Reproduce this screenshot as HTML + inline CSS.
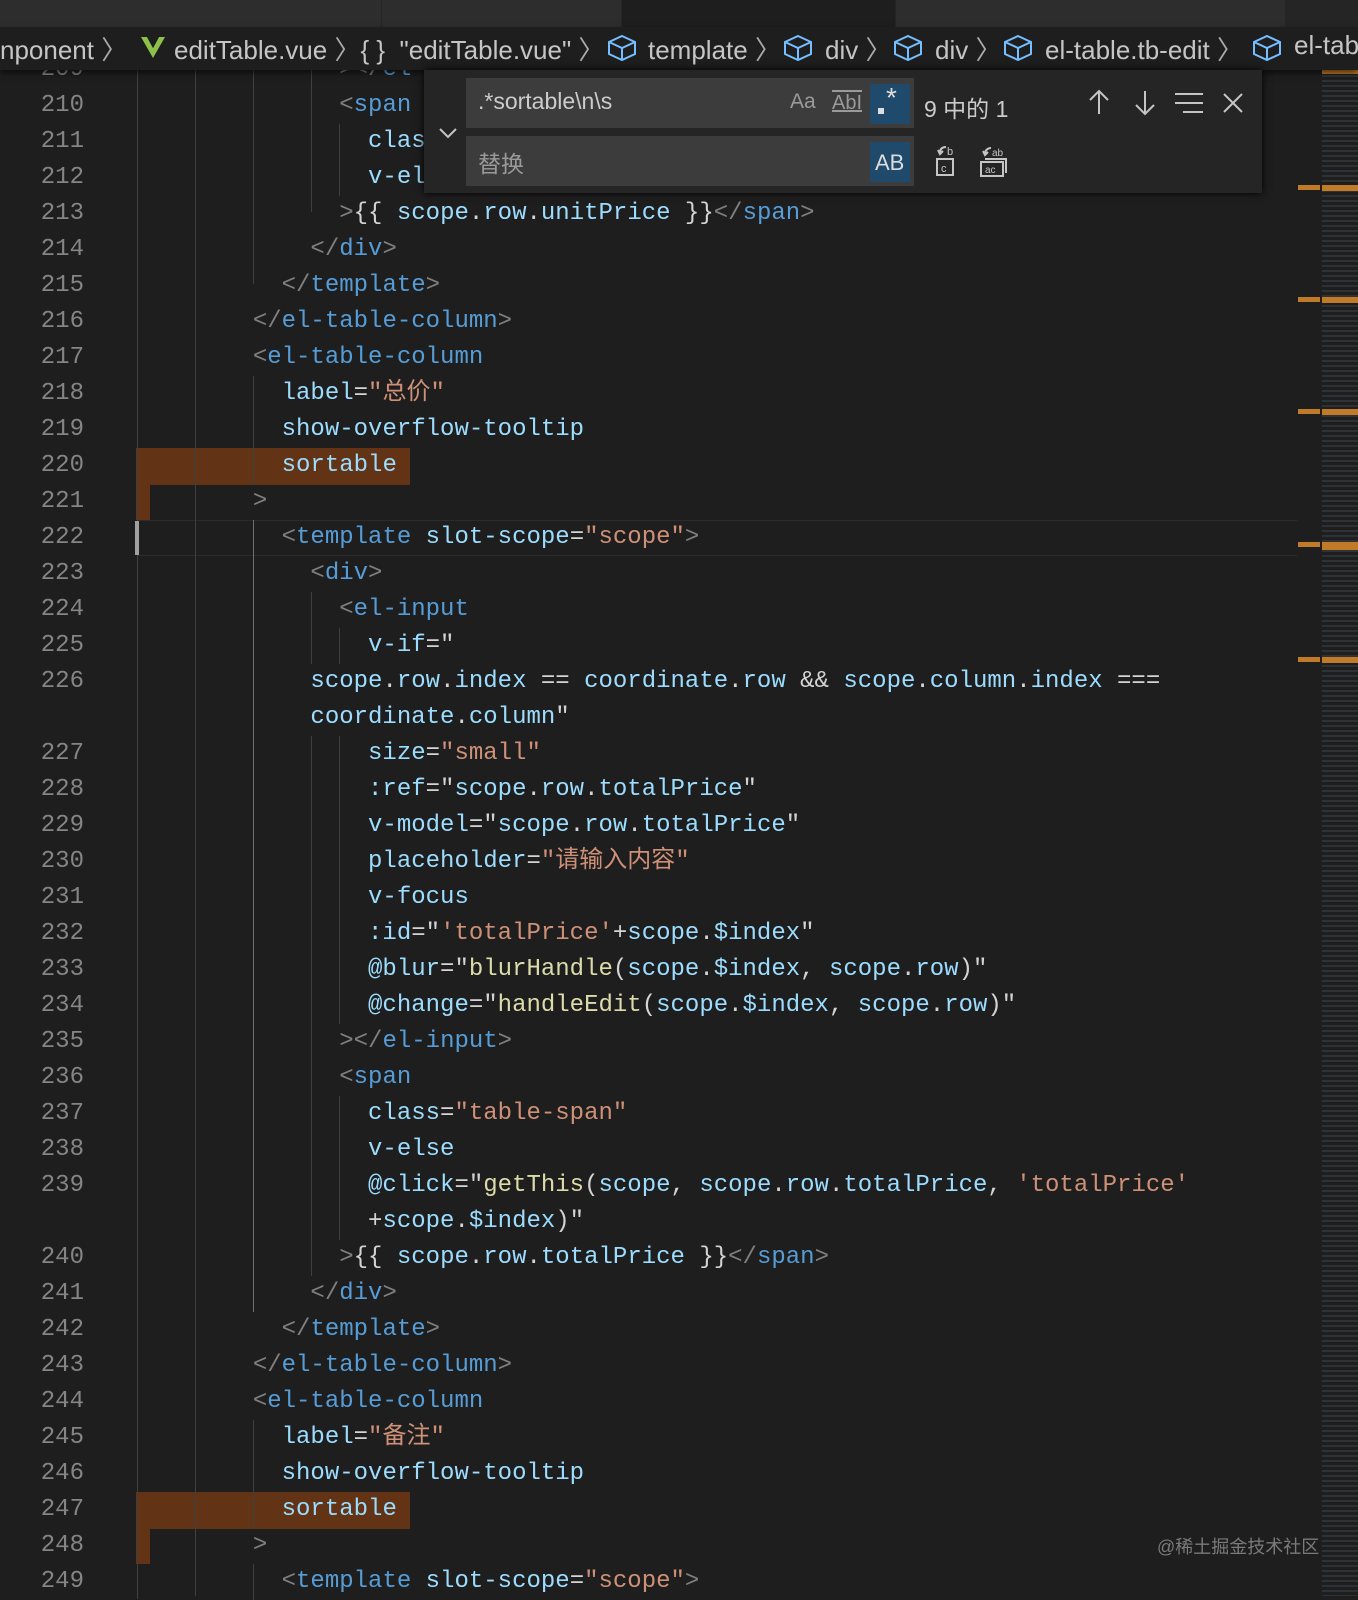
<!DOCTYPE html>
<html><head><meta charset="utf-8"><style>
body{margin:0;width:1358px;height:1596px;background:#1e1e1e;overflow:hidden;position:relative;font-family:"Liberation Mono","Noto Sans CJK SC",monospace}
.tabs{position:absolute;left:0;top:0;width:1358px;height:27px;background:#252526;z-index:5}
.tab{position:absolute;top:0;height:27px;background:#2d2d2d;border-right:1px solid #252526}
.bc{position:absolute;left:0;top:27px;width:1358px;height:43px;background:#1e1e1e;z-index:5;box-shadow:0 3px 6px rgba(0,0,0,.6);font-family:"Liberation Sans",sans-serif;font-size:26px;color:#c5c5c5;white-space:nowrap}
.bc span{position:absolute;top:3px}
.bc i{font-style:normal;color:#aaa}
.code{position:absolute;left:0;top:3px;width:1300px;height:1596px}
.l{position:absolute;left:0;height:36px;line-height:36px;font-size:24px;white-space:pre;width:1270px}
.n{position:absolute;left:0;width:84px;text-align:right;color:#858585}
.c{position:absolute;left:137.6px;color:#d4d4d4}
.p{color:#808080}.t{color:#569cd6}.a{color:#9cdcfe}.s{color:#ce9178}.f{color:#dcdcaa}.w{color:#d4d4d4}
.g{position:absolute;width:1px;background:#404040}
.hl{position:absolute;background:#623315}
.fw{position:absolute;left:424px;top:70px;width:838px;height:123px;background:#252526;box-shadow:0 0 8px #000;z-index:6;font-family:"Liberation Sans","Noto Sans CJK SC",sans-serif;color:#cccccc}
.in{position:absolute;background:#3c3c3c}
.mm{position:absolute;left:1322px;top:70px;width:36px;height:1526px;background:repeating-linear-gradient(180deg,rgba(110,140,160,.18) 0 2px,transparent 2px 5px);z-index:1}
.or{position:absolute;background:#c07a28;z-index:2}
</style></head><body>
<div class="tabs">
<div class="tab" style="left:0;width:381px"></div>
<div class="tab" style="left:382px;width:239px"></div>
<div class="tab" style="left:622px;width:273px;background:#1e1e1e"></div>
<div class="tab" style="left:896px;width:389px"></div>
</div>
<div class="bc">
<span style="left:0">nponent <i>〉</i></span>
<svg style="position:absolute;left:140px;top:9px" width="26" height="22" viewBox="0 0 26 22"><path d="M1 1h6l6 11 6-11h6L13 22z" fill="#8dc149"/><path d="M7 1h4l2 4 2-4h4l-6 11z" fill="#1e1e1e"/></svg>
<span style="left:174px">editTable.vue <i>〉</i>{ }&nbsp; &quot;editTable.vue&quot; <i>〉</i></span>
<span style="left:648px">template <i>〉</i></span>
<span style="left:825px">div <i>〉</i></span>
<span style="left:935px">div <i>〉</i></span>
<span style="left:1045px">el-table.tb-edit <i>〉</i></span>
<span style="left:1294px">el-tab</span>
<svg style="position:absolute;left:607px;top:7px" width="30" height="28" viewBox="0 0 30 28"><path d="M15 2 28 8v12L15 26 2 20V8zM2 8l13 6 13-6M15 14v12" fill="none" stroke="#75beff" stroke-width="2"/></svg>
<svg style="position:absolute;left:783px;top:7px" width="30" height="28" viewBox="0 0 30 28"><path d="M15 2 28 8v12L15 26 2 20V8zM2 8l13 6 13-6M15 14v12" fill="none" stroke="#75beff" stroke-width="2"/></svg>
<svg style="position:absolute;left:893px;top:7px" width="30" height="28" viewBox="0 0 30 28"><path d="M15 2 28 8v12L15 26 2 20V8zM2 8l13 6 13-6M15 14v12" fill="none" stroke="#75beff" stroke-width="2"/></svg>
<svg style="position:absolute;left:1003px;top:7px" width="30" height="28" viewBox="0 0 30 28"><path d="M15 2 28 8v12L15 26 2 20V8zM2 8l13 6 13-6M15 14v12" fill="none" stroke="#75beff" stroke-width="2"/></svg>
<svg style="position:absolute;left:1252px;top:7px" width="30" height="28" viewBox="0 0 30 28"><path d="M15 2 28 8v12L15 26 2 20V8zM2 8l13 6 13-6M15 14v12" fill="none" stroke="#75beff" stroke-width="2"/></svg>
</div>

<div class="code">
<div class="hl" style="left:136px;top:445px;width:274px;height:37px"></div>
<div class="hl" style="left:136px;top:481px;width:14px;height:36px"></div>
<div class="hl" style="left:136px;top:1489px;width:274px;height:37px"></div>
<div class="hl" style="left:136px;top:1525px;width:14px;height:36px"></div>
<div style="position:absolute;left:137px;top:517px;width:1160px;height:34px;border-top:1px solid #2c2c2c;border-bottom:1px solid #2c2c2c"></div>
<div style="position:absolute;left:135px;top:518px;width:4px;height:34px;background:#a0a0a0"></div>
<div class="g" style="left:137px;top:67px;height:451px"></div>
<div class="g" style="left:137px;top:552px;height:1044px"></div>
<div class="g" style="left:195px;top:67px;height:1526px"></div>
<div class="g" style="left:253px;top:67px;height:214px"></div>
<div class="g" style="left:253px;top:373px;height:108px"></div>
<div class="g" style="left:253px;top:517px;height:792px;background:#707070"></div>
<div class="g" style="left:253px;top:1417px;height:108px"></div>
<div class="g" style="left:253px;top:1561px;height:36px"></div>
<div class="g" style="left:311px;top:67px;height:142px"></div>
<div class="g" style="left:311px;top:589px;height:72px"></div>
<div class="g" style="left:311px;top:733px;height:540px"></div>
<div class="g" style="left:339px;top:121px;height:72px"></div>
<div class="g" style="left:339px;top:625px;height:36px"></div>
<div class="g" style="left:339px;top:733px;height:288px"></div>
<div class="g" style="left:339px;top:1093px;height:144px"></div>

<div class="l" style="top:49px"><span class="n">209</span><span class="c">              <span class="p">&gt;&lt;/</span><span class="t">el-input</span><span class="p">&gt;</span></span></div>
<div class="l" style="top:85px"><span class="n">210</span><span class="c">              <span class="p">&lt;</span><span class="t">span</span></span></div>
<div class="l" style="top:121px"><span class="n">211</span><span class="c">                <span class="a">class</span>=<span class="s">"table-span"</span></span></div>
<div class="l" style="top:157px"><span class="n">212</span><span class="c">                <span class="a">v-else</span></span></div>
<div class="l" style="top:193px"><span class="n">213</span><span class="c">              <span class="p">&gt;</span>{{ <span class="a">scope</span>.<span class="a">row</span>.<span class="a">unitPrice</span> }}<span class="p">&lt;/</span><span class="t">span</span><span class="p">&gt;</span></span></div>
<div class="l" style="top:229px"><span class="n">214</span><span class="c">            <span class="p">&lt;/</span><span class="t">div</span><span class="p">&gt;</span></span></div>
<div class="l" style="top:265px"><span class="n">215</span><span class="c">          <span class="p">&lt;/</span><span class="t">template</span><span class="p">&gt;</span></span></div>
<div class="l" style="top:301px"><span class="n">216</span><span class="c">        <span class="p">&lt;/</span><span class="t">el-table-column</span><span class="p">&gt;</span></span></div>
<div class="l" style="top:337px"><span class="n">217</span><span class="c">        <span class="p">&lt;</span><span class="t">el-table-column</span></span></div>
<div class="l" style="top:373px"><span class="n">218</span><span class="c">          <span class="a">label</span>=<span class="s">"总价"</span></span></div>
<div class="l" style="top:409px"><span class="n">219</span><span class="c">          <span class="a">show-overflow-tooltip</span></span></div>
<div class="l" style="top:445px"><span class="n">220</span><span class="c">          <span class="a">sortable</span></span></div>
<div class="l" style="top:481px"><span class="n">221</span><span class="c">        <span class="p">&gt;</span></span></div>
<div class="l" style="top:517px"><span class="n">222</span><span class="c">          <span class="p">&lt;</span><span class="t">template</span> <span class="a">slot-scope</span>=<span class="s">"scope"</span><span class="p">&gt;</span></span></div>
<div class="l" style="top:553px"><span class="n">223</span><span class="c">            <span class="p">&lt;</span><span class="t">div</span><span class="p">&gt;</span></span></div>
<div class="l" style="top:589px"><span class="n">224</span><span class="c">              <span class="p">&lt;</span><span class="t">el-input</span></span></div>
<div class="l" style="top:625px"><span class="n">225</span><span class="c">                <span class="a">v-if</span>="</span></div>
<div class="l" style="top:661px"><span class="n">226</span><span class="c">            <span class="a">scope</span>.<span class="a">row</span>.<span class="a">index</span> == <span class="a">coordinate</span>.<span class="a">row</span> &amp;&amp; <span class="a">scope</span>.<span class="a">column</span>.<span class="a">index</span> ===</span></div>
<div class="l" style="top:697px"><span class="c">            <span class="a">coordinate</span>.<span class="a">column</span>"</span></div>
<div class="l" style="top:733px"><span class="n">227</span><span class="c">                <span class="a">size</span>=<span class="s">"small"</span></span></div>
<div class="l" style="top:769px"><span class="n">228</span><span class="c">                <span class="a">:ref</span>="<span class="a">scope</span>.<span class="a">row</span>.<span class="a">totalPrice</span>"</span></div>
<div class="l" style="top:805px"><span class="n">229</span><span class="c">                <span class="a">v-model</span>="<span class="a">scope</span>.<span class="a">row</span>.<span class="a">totalPrice</span>"</span></div>
<div class="l" style="top:841px"><span class="n">230</span><span class="c">                <span class="a">placeholder</span>=<span class="s">"请输入内容"</span></span></div>
<div class="l" style="top:877px"><span class="n">231</span><span class="c">                <span class="a">v-focus</span></span></div>
<div class="l" style="top:913px"><span class="n">232</span><span class="c">                <span class="a">:id</span>="<span class="s">'totalPrice'</span>+<span class="a">scope</span>.<span class="a">$index</span>"</span></div>
<div class="l" style="top:949px"><span class="n">233</span><span class="c">                <span class="a">@blur</span>="<span class="f">blurHandle</span>(<span class="a">scope</span>.<span class="a">$index</span>, <span class="a">scope</span>.<span class="a">row</span>)"</span></div>
<div class="l" style="top:985px"><span class="n">234</span><span class="c">                <span class="a">@change</span>="<span class="f">handleEdit</span>(<span class="a">scope</span>.<span class="a">$index</span>, <span class="a">scope</span>.<span class="a">row</span>)"</span></div>
<div class="l" style="top:1021px"><span class="n">235</span><span class="c">              <span class="p">&gt;&lt;/</span><span class="t">el-input</span><span class="p">&gt;</span></span></div>
<div class="l" style="top:1057px"><span class="n">236</span><span class="c">              <span class="p">&lt;</span><span class="t">span</span></span></div>
<div class="l" style="top:1093px"><span class="n">237</span><span class="c">                <span class="a">class</span>=<span class="s">"table-span"</span></span></div>
<div class="l" style="top:1129px"><span class="n">238</span><span class="c">                <span class="a">v-else</span></span></div>
<div class="l" style="top:1165px"><span class="n">239</span><span class="c">                <span class="a">@click</span>="<span class="f">getThis</span>(<span class="a">scope</span>, <span class="a">scope</span>.<span class="a">row</span>.<span class="a">totalPrice</span>, <span class="s">'totalPrice'</span></span></div>
<div class="l" style="top:1201px"><span class="c">                +<span class="a">scope</span>.<span class="a">$index</span>)"</span></div>
<div class="l" style="top:1237px"><span class="n">240</span><span class="c">              <span class="p">&gt;</span>{{ <span class="a">scope</span>.<span class="a">row</span>.<span class="a">totalPrice</span> }}<span class="p">&lt;/</span><span class="t">span</span><span class="p">&gt;</span></span></div>
<div class="l" style="top:1273px"><span class="n">241</span><span class="c">            <span class="p">&lt;/</span><span class="t">div</span><span class="p">&gt;</span></span></div>
<div class="l" style="top:1309px"><span class="n">242</span><span class="c">          <span class="p">&lt;/</span><span class="t">template</span><span class="p">&gt;</span></span></div>
<div class="l" style="top:1345px"><span class="n">243</span><span class="c">        <span class="p">&lt;/</span><span class="t">el-table-column</span><span class="p">&gt;</span></span></div>
<div class="l" style="top:1381px"><span class="n">244</span><span class="c">        <span class="p">&lt;</span><span class="t">el-table-column</span></span></div>
<div class="l" style="top:1417px"><span class="n">245</span><span class="c">          <span class="a">label</span>=<span class="s">"备注"</span></span></div>
<div class="l" style="top:1453px"><span class="n">246</span><span class="c">          <span class="a">show-overflow-tooltip</span></span></div>
<div class="l" style="top:1489px"><span class="n">247</span><span class="c">          <span class="a">sortable</span></span></div>
<div class="l" style="top:1525px"><span class="n">248</span><span class="c">        <span class="p">&gt;</span></span></div>
<div class="l" style="top:1561px"><span class="n">249</span><span class="c">          <span class="p">&lt;</span><span class="t">template</span> <span class="a">slot-scope</span>=<span class="s">"scope"</span><span class="p">&gt;</span></span></div>
</div>

<div class="mm"></div>
<div class="or" style="left:1322px;top:70px;width:36px;height:4px"></div>
<div class="or" style="left:1322px;top:185px;width:36px;height:6px"></div>
<div class="or" style="left:1322px;top:297px;width:36px;height:6px"></div>
<div class="or" style="left:1322px;top:409px;width:36px;height:6px"></div>
<div class="or" style="left:1322px;top:542px;width:36px;height:8px"></div>
<div class="or" style="left:1322px;top:657px;width:36px;height:6px"></div>
<div class="or" style="left:1298px;top:185px;width:22px;height:5px"></div>
<div class="or" style="left:1298px;top:297px;width:22px;height:5px"></div>
<div class="or" style="left:1298px;top:409px;width:22px;height:5px"></div>
<div class="or" style="left:1298px;top:542px;width:22px;height:5px"></div>
<div class="or" style="left:1298px;top:657px;width:22px;height:5px"></div>

<div style="position:absolute;left:1157px;top:1533px;font-family:'Liberation Sans','Noto Sans CJK SC',sans-serif;font-size:18px;color:#7a7a7a;z-index:3">@稀土掘金技术社区</div>

<div class="fw">
<svg style="position:absolute;left:14px;top:56px" width="20" height="14" viewBox="0 0 20 14"><path d="M2 3l8 8 8-8" fill="none" stroke="#c5c5c5" stroke-width="2"/></svg>
<div class="in" style="left:42px;top:8px;width:448px;height:50px">
<span style="position:absolute;left:12px;top:10px;font-size:23px">.*sortable\n\s</span>
<span style="position:absolute;left:324px;top:12px;font-size:21px;color:#9a9a9a">Aa</span>
<span style="position:absolute;left:366px;top:12px;font-size:20px;color:#9a9a9a;text-decoration:underline;border-top:2px solid #9a9a9a;line-height:22px">AbI</span>
<div style="position:absolute;left:404px;top:6px;width:40px;height:40px;background:#1f4a6b"><span style="position:absolute;left:8px;top:24px;width:6px;height:6px;background:#ddd"></span><span style="position:absolute;left:16px;top:-2px;font-size:28px;color:#ddd">*</span></div>
</div>
<div class="in" style="left:42px;top:66px;width:448px;height:50px">
<span style="position:absolute;left:12px;top:9px;font-size:23px;color:#9a9a9a">替换</span>
<div style="position:absolute;left:404px;top:6px;width:40px;height:40px;background:#1f4a6b"><span style="position:absolute;left:5px;top:8px;font-size:22px;color:#ddd">AB</span></div>
</div>
<span style="position:absolute;left:500px;top:20px;font-size:23px">9 中的 1</span>
<svg style="position:absolute;left:664px;top:18px;width:200px;height:30px" viewBox="0 0 200 30"><g fill="none" stroke="#c5c5c5" stroke-width="2"><path d="M11 26V3M2 12l9-9 9 9"/><path d="M57 3v23M48 17l9 9 9-9"/><path d="M87 6h28M87 15h28M95 24h20"/><path d="M136 6l18 18M154 6l-18 18"/></g></svg>
<svg style="position:absolute;left:510px;top:74px;width:80px;height:36px" viewBox="0 0 80 36"><g fill="none" stroke="#c5c5c5" stroke-width="2"><path d="M6 9c0-5 3-6 6-6M4 6l2 4 3-3"/><rect x="3" y="15" width="16" height="16"/><path d="M51 10c0-4 3-6 6-6M49 7l2 4 3-3"/><rect x="47" y="18" width="22" height="14"/><path d="M51 15h21v14"/></g><text x="13" y="11" font-size="11" fill="#c5c5c5" font-family="Liberation Sans">b</text><text x="7" y="28" font-size="11" fill="#c5c5c5" font-family="Liberation Sans">c</text><text x="58" y="12" font-size="10" fill="#c5c5c5" font-family="Liberation Sans">ab</text><text x="51" y="29" font-size="10" fill="#c5c5c5" font-family="Liberation Sans">ac</text></svg>
</div>
</body></html>
